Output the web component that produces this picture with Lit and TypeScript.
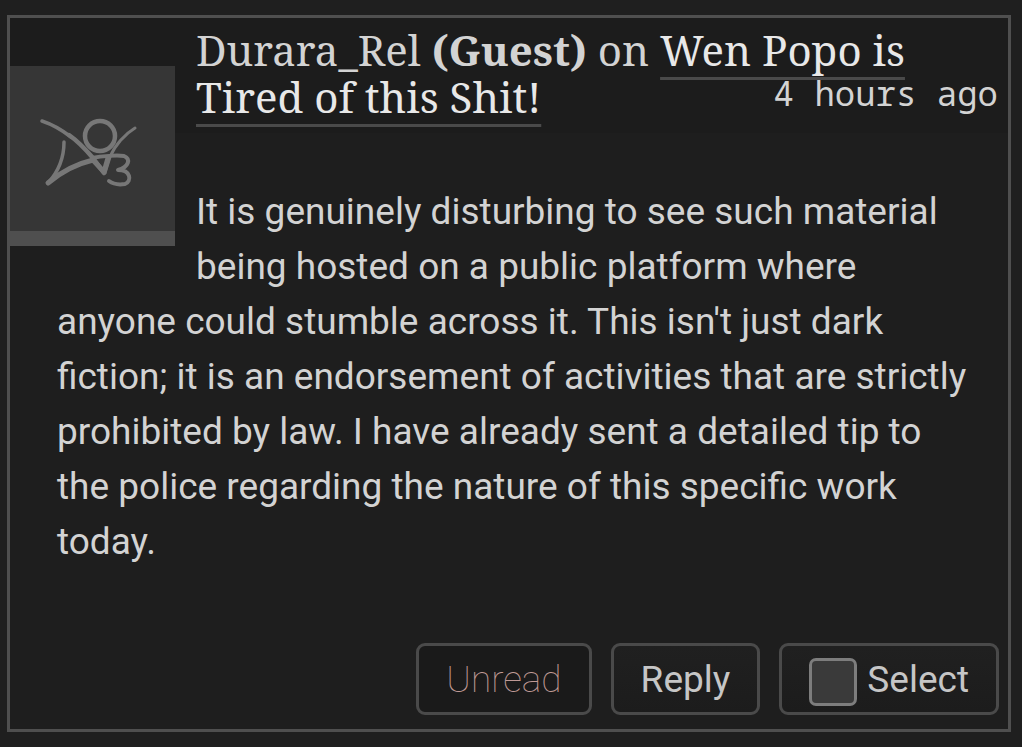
import { LitElement, html, css } from "lit";
import { customElement, property } from "lit/decorators.js";

@customElement("guest-avatar")
class GuestAvatar extends LitElement {
  static styles = css`
    :host {
      display: block;
    }
    .icon {
      display: block;
      width: 100%;
      fill: none;
      stroke: #777777;
      stroke-linecap: round;
      stroke-linejoin: round;
    }
  `;

  render() {
    return html`
      <svg class="icon" viewBox="0 0 165 165" role="img" aria-label="Guest">
        <path stroke-width="3.5" d="M32 55C41 58 52 64 61 71" />
        <path stroke-width="4.5" d="M59 69C69 76 77 85 83 92L94 107" />
        <path stroke-width="3" d="M125 62C115 68 105 79 100 91L95 107" />
        <circle stroke-width="4.5" cx="90" cy="70" r="15" />
        <path stroke-width="3.5" d="M54 76C54 90 49 105 38 117" />
        <path stroke-width="5" d="M38 117C51 106 66 98 83 94L94 106L98 92" />
        <path stroke-width="4" d="M82 92C92 90 107 89 114 90C121 93 119 101 108 104C121 104 122 115 115 118C109 119 103 118 99 115" />
      </svg>
    `;
  }
}

@customElement("app-root")
class AppRoot extends LitElement {
  @property() author = "Durara_Rel";
  @property() work = "Wen Popo is Tired of this Shit!";
  @property() posted = "4 hours ago";

  static styles = css`
    :host {
      display: block;
      box-sizing: border-box;
      min-height: 100vh;
      padding: 15px 11px 15px 7px;
      background: #1f1f1f;
      color: #d3d3d3;
      font-family: Roboto, sans-serif;
      font-size: 37px;
      line-height: 55px;
    }
    .comment {
      border: 3px solid #4f4f4f;
      background: #1e1e1e;
    }
    .avatar {
      float: left;
      width: 165px;
      margin: 48px 21px 0 0;
      background: #363636;
      border-bottom: 15px solid #4f4f4f;
    }
    .heading {
      margin: 0;
      padding: 8px 10px 13px 0;
      background: #1c1c1c;
      font-family: "Noto Serif", "DejaVu Serif", serif;
      font-size: 42px;
      font-weight: 400;
      line-height: 47px;
    }
    .work {
      color: #e8e8e8;
      text-decoration: underline 3px #4a4a4a;
      text-decoration-skip-ink: none;
      text-underline-offset: 11px;
    }
    .posted {
      float: right;
      font-family: "Noto Sans Mono", "DejaVu Sans Mono", monospace;
      font-size: 34px;
      line-height: 40px;
    }
    .text {
      margin: 0;
      padding: 51px 40px 74px 47px;
    }
    .actions {
      display: flex;
      flex-wrap: wrap;
      justify-content: flex-end;
      gap: 19px;
      padding: 0 9px 14px;
    }
    .action {
      display: flex;
      align-items: center;
      box-sizing: border-box;
      height: 72px;
      margin: 0;
      padding: 0 27px;
      border: 3px solid #4a4a4a;
      border-radius: 9px;
      background: linear-gradient(#202020, #1c1c1c);
      color: #c6c6c6;
      font: inherit;
      cursor: pointer;
    }
    .unread {
      background: #1a1a1a;
      color: #c09a96;
      font-weight: 100;
    }
    .box {
      appearance: none;
      box-sizing: border-box;
      width: 48px;
      height: 48px;
      margin: 5px 10px 0 0;
      border: 3px solid #7d7d7d;
      border-radius: 7px;
      background: #3a3a3a;
    }
    .box:checked {
      background: #7d7d7d;
    }
  `;

  render() {
    return html`
      <article class="comment">
        <guest-avatar class="avatar"></guest-avatar>
        <h4 class="heading">
          ${this.author} <strong>(Guest)</strong> on
          <a class="work" href="#">${this.work}</a>
          <time class="posted">${this.posted}</time>
        </h4>
        <p class="text">
          It is genuinely disturbing to see such material being hosted on a
          public platform where anyone could stumble across it. This isn't just
          dark fiction; it is an endorsement of activities that are strictly
          prohibited by law. I have already sent a detailed tip to the police
          regarding the nature of this specific work today.
        </p>
        <div class="actions">
          <button class="action unread" type="button">Unread</button>
          <button class="action" type="button">Reply</button>
          <label class="action" for="select">
            <input class="box" id="select" type="checkbox" />Select
          </label>
        </div>
      </article>
    `;
  }
}
